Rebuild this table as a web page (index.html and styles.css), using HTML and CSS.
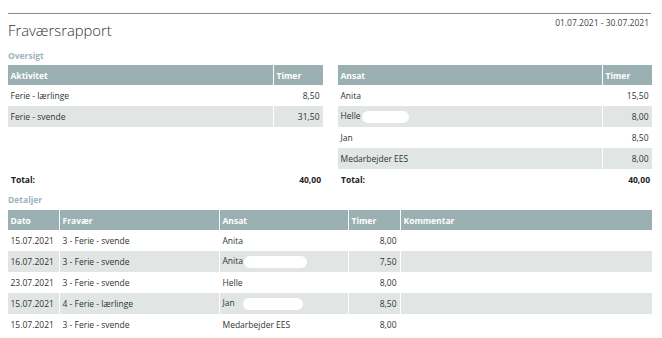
FILE: index.html
```html
<!DOCTYPE html>
<html lang="da">
<head>
<meta charset="utf-8">
<link rel="stylesheet" href="styles.css">
</head>
<body>
<div class="page">
  <header class="head">
    <h1 class="title">Fraværsrapport</h1>
    <div class="period">01.07.2021 - 30.07.2021</div>
  </header>

  <h2 class="section">Oversigt</h2>
  <div class="overview">
    <div class="col">
      <table class="tbl">
        <colgroup><col><col class="c-timer"></colgroup>
        <thead><tr><th>Aktivitet</th><th>Timer</th></tr></thead>
        <tbody>
          <tr><td>Ferie - lærlinge</td><td class="num">8,50</td></tr>
          <tr class="alt"><td>Ferie - svende</td><td class="num">31,50</td></tr>
        </tbody>
      </table>
      <div class="total"><span>Total:</span><span>40,00</span></div>
    </div>
    <div class="col">
      <table class="tbl">
        <colgroup><col><col class="c-timer2"></colgroup>
        <thead><tr><th>Ansat</th><th>Timer</th></tr></thead>
        <tbody>
          <tr><td>Anita</td><td class="num">15,50</td></tr>
          <tr class="alt"><td>Helle<span class="redact r1"></span></td><td class="num">8,00</td></tr>
          <tr><td>Jan</td><td class="num">8,50</td></tr>
          <tr class="alt"><td>Medarbejder EES</td><td class="num">8,00</td></tr>
        </tbody>
      </table>
      <div class="total"><span>Total:</span><span>40,00</span></div>
    </div>
  </div>

  <h2 class="section sec2">Detaljer</h2>
  <table class="tbl details">
    <colgroup>
      <col class="d-dato"><col class="d-frav"><col class="d-ansat"><col class="d-timer"><col>
    </colgroup>
    <thead><tr><th>Dato</th><th>Fravær</th><th>Ansat</th><th>Timer</th><th>Kommentar</th></tr></thead>
    <tbody>
      <tr><td>15.07.2021</td><td>3 - Ferie - svende</td><td>Anita</td><td class="num">8,00</td><td></td></tr>
      <tr class="alt"><td>16.07.2021</td><td>3 - Ferie - svende</td><td>Anita<span class="redact r2"></span></td><td class="num">7,50</td><td></td></tr>
      <tr><td>23.07.2021</td><td>3 - Ferie - svende</td><td>Helle</td><td class="num">8,00</td><td></td></tr>
      <tr class="alt"><td>15.07.2021</td><td>4 - Ferie - lærlinge</td><td>Jan<span class="redact r3"></span></td><td class="num">8,50</td><td></td></tr>
      <tr><td>15.07.2021</td><td>3 - Ferie - svende</td><td>Medarbejder EES</td><td class="num">8,00</td><td></td></tr>
    </tbody>
  </table>
</div>
</body>
</html>
```

FILE: styles.css
```css
* { box-sizing: border-box; }
html, body { margin: 0; padding: 0; background: #fff; }
body {
  font-family: "Open Sans", "Liberation Sans", sans-serif;
  color: #333;
  font-size: 8.5px;
}
.page {
  padding: 13px 11px 0 8px;
}
.head {
  border-top: 1.5px solid #8a8a8a;
  display: flex;
  justify-content: space-between;
  align-items: flex-start;
  height: 37px;
}
.title {
  margin: 4px 0 0 0;
  font-weight: 300;
  font-size: 14.8px;
  line-height: 24px;
  color: #333;
}
.period {
  margin-top: 3px;
  font-size: 8.5px;
  line-height: 12px;
  padding-right: 2px;
  color: #444;
}
.section {
  margin: 0;
  font-size: 8.5px;
  line-height: 12px;
  font-weight: 700;
  color: #9bb5b9;
  height: 15px;
}
.sec2 { height: 16px; margin-top: 4px; }
.overview {
  display: grid;
  grid-template-columns: 314px 313px;
  column-gap: 16px;
}
.col {
  display: flex;
  flex-direction: column;
}
.tbl {
  border-collapse: separate;
  border-spacing: 1.5px 0;
  margin: 0 -1.5px;
  width: calc(100% + 3px);
  table-layout: fixed;
}
.c-timer { width: 49px; }
.c-timer2 { width: 49px; }
.tbl th {
  background: #9bb0b2;
  color: #fff;
  font-weight: 700;
  text-align: left;
  height: 20px;
  padding: 0 3px;
  font-size: 8.5px;
  vertical-align: middle;
}
.tbl td {
  height: 21px;
  padding: 0 3px;
  vertical-align: middle;
  white-space: nowrap;
  color: #333;
}
.tbl tr.alt td { background: #e1e6e5; }
.tbl td.num { text-align: right; }
.total {
  margin-top: auto;
  height: 21px;
  display: flex;
  justify-content: space-between;
  align-items: center;
  font-weight: 700;
  padding: 0 1px 0 3px;
  color: #222;
}
.overview .col:first-child .tbl + .total { margin-top: 42px; }
.d-dato { width: 51px; }
.d-frav { width: 159px; }
.d-ansat { width: 128px; }
.d-timer { width: 51px; }
.redact {
  display: inline-block;
  background: #fff;
  border-radius: 6px;
  height: 12px;
  vertical-align: middle;
}
.r1 { width: 47px; margin-left: 1px; }
.r2 { width: 63px; margin-left: 1px; }
.r3 { width: 60px; margin-left: 8px; }
```
